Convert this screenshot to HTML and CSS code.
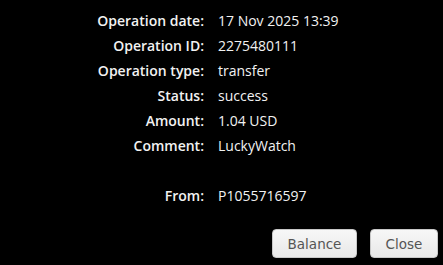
FILE: index.html
```html
<!DOCTYPE html>
<html>
<head>
<meta charset="utf-8">
<link rel="stylesheet" href="styles.css">
</head>
<body>
<div class="panel">
  <div class="details">
    <div class="label">Operation date:</div><div class="value">17 Nov 2025 13:39</div>
    <div class="label">Operation ID:</div><div class="value">2275480111</div>
    <div class="label">Operation type:</div><div class="value">transfer</div>
    <div class="label">Status:</div><div class="value">success</div>
    <div class="label">Amount:</div><div class="value">1.04 USD</div>
    <div class="label">Comment:</div><div class="value">LuckyWatch</div>
    <div class="label"></div><div class="value"></div>
    <div class="label">From:</div><div class="value">P1055716597</div>
  </div>
  <div class="actions">
    <button class="btn btn-balance">Balance</button>
    <button class="btn btn-close">Close</button>
  </div>
</div>
</body>
</html>
```
FILE: styles.css
```css
html, body {
  margin: 0;
  padding: 0;
  background: #000;
}
.panel {
  width: 443px;
  height: 265px;
  display: flex;
  flex-direction: column;
}
.details {
  display: grid;
  grid-template-columns: 204px auto;
  grid-auto-rows: 25px;
  column-gap: 14px;
  padding-top: 8px;
  font-family: "Open Sans", "Lato", sans-serif;
  font-size: 14px;
  color: #f2f2f2;
}
.label {
  text-align: right;
  font-weight: 600;
  line-height: 25px;
}
.value {
  font-weight: 400;
  line-height: 25px;
}
.actions {
  display: flex;
  justify-content: flex-end;
  gap: 13px;
  padding-right: 5px;
  margin-top: 21px;
}
.btn {
  height: 29px;
  border: 1px solid #c8c8c8;
  border-radius: 4px;
  background: linear-gradient(#f7f7f7, #e8e8e8);
  color: #555;
  font-family: "DejaVu Sans", Verdana, sans-serif;
  font-size: 13.5px;
  padding: 0;
}
.btn-balance { width: 85px; }
.btn-close { width: 68px; }
```
